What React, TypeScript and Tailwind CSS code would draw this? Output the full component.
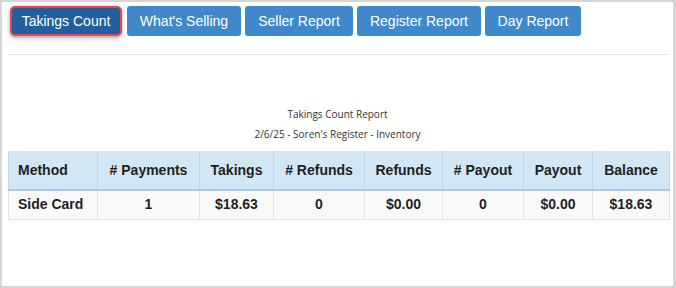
import React from "react";

const cols = [
  { h: "Method", v: "Side Card", w: 89, left: true },
  { h: "# Payments", v: "1", w: 102 },
  { h: "Takings", v: "$18.63", w: 74 },
  { h: "# Refunds", v: "0", w: 91 },
  { h: "Refunds", v: "$0.00", w: 78 },
  { h: "# Payout", v: "0", w: 81 },
  { h: "Payout", v: "$0.00", w: 69 },
  { h: "Balance", v: "$18.63", w: 77 },
];

export default function App() {
  return (
    <div className="w-[676px] h-[288px] bg-white border-[#d6d6d6] border-t-2 border-l-2 border-b-2 border-r-[3px] box-border overflow-hidden">
      <div className="pl-[8px] pt-[4px] flex items-center gap-[4px] font-['Liberation_Sans',Arial,sans-serif] text-[14px] text-white">
        <button className="w-[112px] h-[30px] rounded-[5px] border-2 border-[#e8434b] bg-[#215f9f] shadow-[0_2px_4px_rgba(0,0,0,0.35)] leading-none mr-[1px]">
          Takings Count
        </button>
        <button className="w-[114px] h-[30px] rounded-[3px] bg-[#3f89ca] leading-none">What's Selling</button>
        <button className="w-[108px] h-[30px] rounded-[3px] bg-[#3f89ca] leading-none">Seller Report</button>
        <button className="w-[124px] h-[30px] rounded-[3px] bg-[#3f89ca] leading-none">Register Report</button>
        <button className="w-[96px] h-[30px] rounded-[3px] bg-[#3f89ca] leading-none">Day Report</button>
      </div>
      <div className="ml-[6px] mr-[5px] mt-[18px] border-t border-[#e6e6e6]" />
      <div className="font-['Open_Sans',sans-serif] text-[10px] text-[#333] text-center mt-[52px] leading-[14px]">
        <div>Takings Count Report</div>
        <div className="mt-[6px]">2/6/25 - Soren's Register - Inventory</div>
      </div>
      <div className="ml-[6px] mt-[10px]">
        <table className="w-[661px] table-fixed border-collapse font-['Liberation_Sans',Arial,sans-serif] text-[14px] font-bold text-[#1f1f24]">
          <colgroup>
            {cols.map((c) => (
              <col key={c.h} style={{ width: c.w }} />
            ))}
          </colgroup>
          <thead>
            <tr className="bg-[#d3e6f3] h-[39px]">
              {cols.map((c) => (
                <th
                  key={c.h}
                  className={`border-x border-[#bcd6ea] border-b-2 border-b-[#a8cbe3] font-bold ${c.left ? "text-left pl-[9px]" : "text-center"}`}
                >
                  {c.h}
                </th>
              ))}
            </tr>
          </thead>
          <tbody>
            <tr className="bg-[#f9f9f9] h-[29px]">
              {cols.map((c) => (
                <td
                  key={c.h}
                  className={`border border-[#e3e3e3] ${c.left ? "text-left pl-[9px]" : "text-center"}`}
                >
                  {c.v}
                </td>
              ))}
            </tr>
          </tbody>
        </table>
      </div>
    </div>
  );
}
